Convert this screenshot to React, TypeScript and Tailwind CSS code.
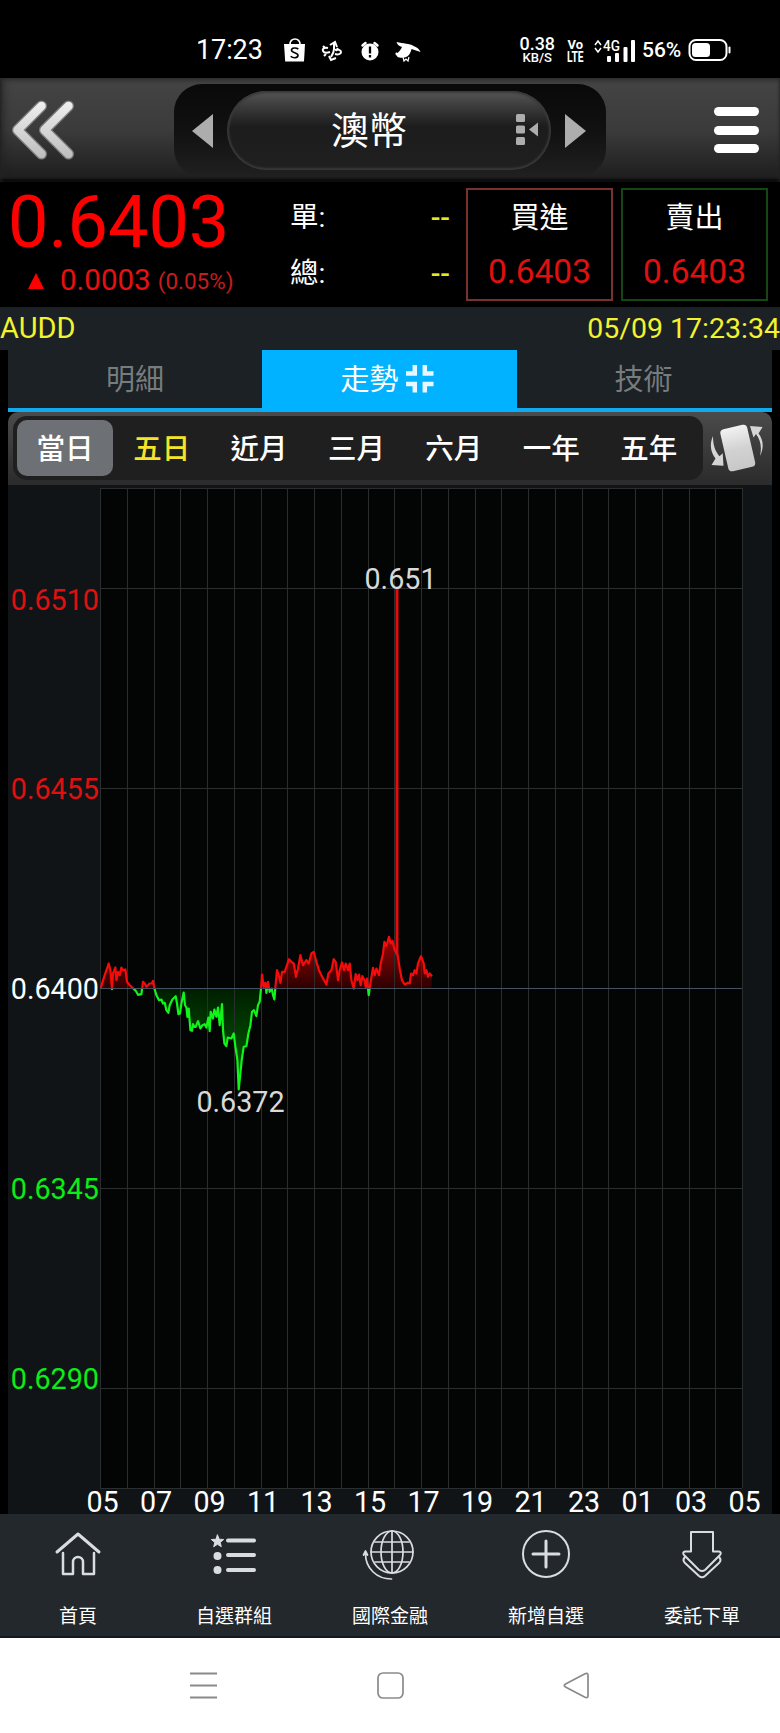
import type { ReactNode } from "react";

const RANGES = ["當日", "五日", "近月", "三月", "六月", "一年", "五年"];
const HOURS = ["05", "07", "09", "11", "13", "15", "17", "19", "21", "23", "01", "03", "05"];

const LEVELS = [
  { label: "0.6510", y: 104, text: 124.5, fill: "#e01010" },
  { label: "0.6455", y: 304, text: 313.5, fill: "#e01010" },
  { label: "0.6400", y: 504, text: 514, fill: "#ffffff" },
  { label: "0.6345", y: 704, text: 714, fill: "#0cec18" },
  { label: "0.6290", y: 904, text: 904, fill: "#0cec18" },
];

// [time, offset from the open], three steps to a pixel
const TICKS = [
  [0, 2], [12, 40], [24, 75], [29, 55], [34, -2], [37, 45], [44, 63], [47, 25], [52, 50], [57, 40],
  [62, 63], [67, 55], [74, 57], [79, 20], [87, 10], [97, 1], [105, -7], [112, -19], [122, -17], [124, -3],
  [127, 20], [132, 15], [137, 5], [147, 15], [154, 15], [157, 23], [161, 0], [167, -20], [175, -35], [182, -33],
  [187, -45], [192, -43], [197, -65], [203, -73], [207, -50], [215, -33], [225, -23], [229, -45], [233, -77], [238, -75],
  [242, -45], [249, -12], [253, -50], [257, -57], [260, -85], [264, -60], [269, -125], [274, -127], [277, -107], [281, -115],
  [285, -115], [292, -98], [299, -120], [305, -110], [312, -107], [317, -117], [323, -87], [327, -128], [330, -70], [337, -90],
  [341, -63], [347, -85], [352, -57], [357, -110], [360, -85], [364, -47], [367, -125], [371, -165], [377, -173], [381, -147],
  [392, -150], [399, -135], [404, -175], [410, -215], [414, -303], [419, -255], [423, -215], [429, -175], [437, -173], [443, -135],
  [449, -110], [454, -70], [460, -65], [467, -83], [472, -50], [477, -40], [481, 0], [484, 42], [489, 5], [494, 17],
  [497, -13], [502, 20], [507, -10], [513, 0], [517, -20], [521, -33], [525, 15], [529, 55], [534, 40], [539, 17],
  [544, 50], [552, 50], [559, 70], [565, 88], [572, 80], [579, 75], [586, 35], [592, 60], [599, 100], [607, 70],
  [617, 85], [624, 75], [632, 105], [639, 110], [647, 80], [655, 55], [662, 40], [669, 27], [677, 12], [683, 45],
  [692, 55], [699, 88], [705, 80], [712, 25], [717, 55], [724, 78], [730, 55], [735, 75], [742, 55], [747, 75],
  [752, 25], [759, 0], [765, 43], [770, 25], [775, 42], [780, 10], [785, 37], [791, 25], [795, 5], [799, 30],
  [804, -20], [809, 15], [817, 62], [822, 40], [827, 60], [835, 40], [840, 75], [847, 105], [851, 140], [857, 127],
  [865, 155], [870, 135], [875, 143], [882, 115], [891, 100], [897, 60], [904, 25], [912, 12], [922, 17], [927, 15],
  [931, 45], [937, 40], [942, 55], [947, 45], [952, 75], [961, 97], [969, 75], [972, 45], [977, 55], [982, 35],
  [987, 45], [994, 37],
];

const PLOT = { left: 92, top: 3, width: 642, height: 1000, base: 503.5 };
const line = TICKS.map(([t, v]) => `${(PLOT.left + 0.7 + t / 3).toFixed(1)},${(PLOT.base - v / 3).toFixed(1)}`).join(" ");
const area = `${PLOT.left},${PLOT.base} ${line} ${PLOT.left + 994 / 3},${PLOT.base}`;

function StatusBar() {
  return (
    <div className="flex h-[78px] items-center bg-black pl-[196px] pr-[49px] pt-[22px] text-white">
      <span className="w-[88px] text-[27px] leading-none tracking-[-0.1px]">17:23</span>
      <svg width="140" height="28" viewBox="0 0 140 28" fill="none">
        <path d="M6 9V8a5 5 0 0 1 10 0v1" stroke="#fff" strokeWidth="1.7" />
        <path d="M0 8h21l-1 17.500H1.200z" fill="#fff" />
        <path d="M14.300 13.200c-2-1.900-6.800-1.700-6.800 1 0 3 6.700 1.900 6.500 5.200-.2 2.900-5.100 3-7.300.8" stroke="#000" strokeWidth="1.600" />
        <g stroke="#fff" strokeWidth="2">
          <path d="M47 21c2-3 3-5 3-8M46 9l5-3 2 5M50 6l0 7" />
          <path d="M44 12c-4-1-6 1-5 3s4 2 7 1M39 10l2 2" />
          <path d="M51 14c3-1 6 0 6 2s-3 3-6 2M54 12l-2 3" />
          <path d="M45 20l2 4 5-2M42 18l-2 2" />
        </g>
        <circle cx="86" cy="16" r="8.500" fill="#fff" />
        <path d="M78.500 9.500l3-2.500M93.500 9.500l-3-2.500" stroke="#fff" strokeWidth="2.500" strokeLinecap="round" />
        <path d="M86 10.500v7M86 19v2.400" stroke="#000" strokeWidth="2.300" />
        <path
          d="M112.500 6c7 2 13 1 17 4 3 1 6 3 7 6l-9-3c-1 5-4 9-8 8.500-4 .5-6 0-7-2-2-1-1-4 1-2.500 2-2 3-3 4.500-6-3-1-4.500-2-5.500-5z"
          fill="#fff"
        />
        <path d="M119 21l1 4 2-2 2 2 1-4" stroke="#fff" strokeWidth="1.200" />
      </svg>
      <svg width="37" height="28" viewBox="0 0 37 28" className="ml-auto" fill="#fff" fontWeight="500">
        <text x="0.500" y="13.500" fontSize="17.500" textLength="35.500" lengthAdjust="spacingAndGlyphs">0.38</text>
        <text x="3.500" y="26" fontSize="13" textLength="29.500" lengthAdjust="spacingAndGlyphs">KB/S</text>
      </svg>
      <svg width="17" height="26" viewBox="0 0 17 26" className="ml-[11px]" fill="#fff" fontWeight="700">
        <text x="0.500" y="12" fontSize="13.500" textLength="15.500" lengthAdjust="spacingAndGlyphs">Vo</text>
        <text x="0" y="24.500" fontSize="14" textLength="16.500" lengthAdjust="spacingAndGlyphs">LTE</text>
      </svg>
      <svg width="42" height="26" viewBox="0 0 42 26" className="ml-[10px]" fill="#fff">
        <path d="M1 8l3-4 3 4M1 11l3 4 3-4" fill="none" stroke="#fff" strokeWidth="1.500" />
        <text x="9" y="14" fontSize="15" fontWeight="500" textLength="17" lengthAdjust="spacingAndGlyphs">4G</text>
        <rect x="13" y="19" width="4" height="6" rx="1" />
        <rect x="21" y="16" width="4" height="9" rx="1" />
        <rect x="29.500" y="10" width="4" height="15" rx="1" />
        <rect x="37" y="3" width="4" height="22" rx="1" />
      </svg>
      <span className="ml-[6px] w-[42px] whitespace-nowrap text-[21px] font-medium leading-none">56%</span>
      <svg width="43" height="24" viewBox="0 0 43 24" className="ml-[4px]">
        <rect x="1.500" y="2" width="37" height="20" rx="6.500" fill="none" stroke="#fff" strokeWidth="2" />
        <rect x="4" y="5" width="18" height="14" rx="3.500" fill="#fff" />
        <rect x="40.500" y="8.500" width="2" height="7" rx="1" fill="#fff" />
      </svg>
    </div>
  );
}

function TitleBar() {
  return (
    <div className="flex h-[104px] items-start bg-linear-to-b from-[#444] via-[#3b3b3b] to-[#1c1c1c] pl-[10px] pr-[21px] pt-[6px] shadow-[inset_0_2px_4px_#2b2b2b,inset_0_-3px_2px_#0a0a0a,inset_8px_0_10px_-6px_#222]">
      <svg width="66" height="66" viewBox="0 0 66 66" className="mt-[13px]">
        <defs>
          <linearGradient id="back" x1="0" y1="0" x2="0" y2="66" gradientUnits="userSpaceOnUse">
            <stop offset="0" stopColor="#f4f4f4" />
            <stop offset="1" stopColor="#b9b9b9" />
          </linearGradient>
        </defs>
        <g fill="none" stroke="#7c7c7c" strokeWidth="11" strokeLinecap="round" strokeLinejoin="round">
          <path d="M31.500 9L7.500 33l24 24M58.500 9L34.500 33l24 24" />
        </g>
        <g fill="none" stroke="url(#back)" strokeWidth="8.500" strokeLinecap="round" strokeLinejoin="round">
          <path d="M31.500 9L7.500 33l24 24M58.500 9L34.500 33l24 24" />
        </g>
      </svg>
      <div className="ml-[98px] flex h-[93px] w-[432px] items-center justify-between rounded-[28px] bg-linear-to-b from-[#090909] via-[#111] to-[#202020] pl-[17px] pr-[19px]">
        <svg width="24" height="36" viewBox="0 0 24 36">
          <path d="M1 18L22 1v34z" fill="#adadad" />
        </svg>
        <div className="relative flex h-[79px] w-[324px] items-center justify-center rounded-full bg-linear-to-b from-[#565656] via-[#1c1c1c] via-45% to-[#202020] pr-[40px] shadow-[inset_0_0_2px_2px_#393939]">
          <span className="text-[38px] leading-none text-white">澳幣</span>
          <svg width="23" height="32" viewBox="0 0 23 32" className="absolute right-[12px] top-[22px]" fill="#adadad">
            <rect x="0" y="1" width="9" height="8" rx="1.500" />
            <rect x="0" y="12.500" width="9" height="8" rx="1.500" />
            <rect x="0" y="24" width="9" height="8" rx="1.500" />
            <path d="M13 16.500l9-7v14z" />
          </svg>
        </div>
        <svg width="24" height="36" viewBox="0 0 24 36">
          <path d="M23 18L2 1v34z" fill="#adadad" />
        </svg>
      </div>
      <div className="ml-auto mt-[23px] flex w-[45px] flex-col gap-[9.500px]">
        <div className="h-[9px] rounded-full bg-white" />
        <div className="h-[9px] rounded-full bg-white" />
        <div className="h-[9px] rounded-full bg-white" />
      </div>
    </div>
  );
}

function PriceBox({ title, border }: { title: string; border: string }) {
  return (
    <div className={`flex h-[113px] w-[147px] flex-col items-center border-2 ${border}`}>
      <span className="mt-[9px] text-[29px] leading-[38px] text-white">{title}</span>
      <span className="mt-[15px] text-[33.500px] leading-[40px] text-[#e01010]">0.6403</span>
    </div>
  );
}

function Quote() {
  return (
    <div className="flex h-[125px] bg-black">
      <div className="w-[290px] whitespace-nowrap pl-[8px] text-[#f00]">
        <div className="mt-[6px] text-[72px] leading-[70px]">0.6403</div>
        <div className="flex items-center pl-[20px]">
          <svg width="16" height="16" viewBox="0 0 16 16">
            <path d="M8 0l8 16H0z" fill="#f00" />
          </svg>
          <span className="ml-[16px] text-[29.500px] leading-[45px] text-[#e81010]">0.0003</span>
          <span className="ml-[7px] text-[22.500px] leading-[40px] text-[#c71c1c]">(0.05%)</span>
        </div>
      </div>
      <div className="flex w-[160px] flex-col pt-[15px] text-[28.500px] leading-[42px] text-white">
        <div className="flex justify-between">
          <span>單:</span>
          <span className="font-medium text-[#e8e81c]">--</span>
        </div>
        <div className="mt-[14px] flex justify-between">
          <span>總:</span>
          <span className="font-medium text-[#e8e81c]">--</span>
        </div>
      </div>
      <div className="ml-[16px] mt-[6px] flex gap-[8px]">
        <PriceBox title="買進" border="border-[#7b3030]" />
        <PriceBox title="賣出" border="border-[#164616]" />
      </div>
    </div>
  );
}

function Tabs() {
  return (
    <div className="flex h-[62px] border-b-4 border-[#12a9ee] bg-[#1b2124] text-[29px] leading-[60px] text-[#777c7e]">
      <div className="w-[254px] text-center">明細</div>
      <div className="flex h-[62px] w-[255px] justify-center bg-[#00b2ff] pr-[5px] text-white">
        走勢
        <svg width="28" height="28" viewBox="0 0 28 28" className="ml-[7px] mt-[15px]" fill="none" stroke="#e8f7ff" strokeWidth="4.500">
          <path d="M0 8.500h8.800V0M27.500 8.500h-8.700V0M0 19h8.800v8.500M27.500 19h-8.700v8.500" />
        </svg>
      </div>
      <div className="w-[253px] text-center">技術</div>
    </div>
  );
}

function RangeBar() {
  return (
    <div className="flex h-[73px] rounded-t-[10px] bg-linear-to-b from-[#4b4b4b] to-[#2b2b2b] pl-[5px] pt-[4px]">
      <div className="flex h-[64px] w-[690px] rounded-[14px] bg-[#1f1f1f] pl-[4px] pt-[4px]">
        {RANGES.map((r, i) => (
          <div
            key={r}
            className={`h-[56px] rounded-[10px] text-center text-[28.500px] font-medium leading-[60px] ${
              i === 0 ? "w-[96px] bg-[#6d7175] text-white" : i === 1 ? "w-[97.400px] text-[#f5e327]" : "w-[97.400px] text-white"
            }`}
          >
            {r}
          </div>
        ))}
      </div>
      <svg width="54" height="54" viewBox="0 0 54 54" className="ml-[7px] mt-[5px]">
        <defs>
          <linearGradient id="phone" x1="0" y1="4" x2="0" y2="52" gradientUnits="userSpaceOnUse">
            <stop offset="0" stopColor="#f4f4f4" />
            <stop offset="0.5" stopColor="#d2d2d2" />
            <stop offset="1" stopColor="#c6c6c6" />
          </linearGradient>
        </defs>
        <g transform="rotate(-13 27.700 27)">
          <rect x="14" y="5.500" width="27.500" height="43" rx="4" fill="url(#phone)" />
        </g>
        <path d="M3 15c-4 9-2 17 2.500 22.500L1.500 44l12 .7-.8-12.500-3.200 3C5 30 3 24 3 15z" fill="#d5d5d5" />
        <path d="M50 35c4.500-9 3-17-1.500-22.500L52.600 6 40 5l3.500 11.500 2.500-3.500c4.500 6 6 13 4 22z" fill="#d5d5d5" />
      </svg>
    </div>
  );
}

function Chart() {
  const { left, top, width, height, base } = PLOT;
  return (
    <svg width="764" height="1029" viewBox="0 0 764 1029" fontSize="28.700" className="block overflow-visible bg-[#101417]">
      <defs>
        <clipPath id="above">
          <rect x="0" y="0" width="764" height={base} />
        </clipPath>
        <clipPath id="below">
          <rect x="0" y={base} width="764" height="300" />
        </clipPath>
        <linearGradient id="up" x1="0" y1="450" x2="0" y2={base} gradientUnits="userSpaceOnUse">
          <stop offset="0" stopColor="#a00404" />
          <stop offset="1" stopColor="#2c0000" />
        </linearGradient>
        <linearGradient id="down" x1="0" y1={base} x2="0" y2="600" gradientUnits="userSpaceOnUse">
          <stop offset="0" stopColor="#001e00" />
          <stop offset="1" stopColor="#006400" />
        </linearGradient>
      </defs>
      <rect x={left} y={top} width={width} height={height} fill="#030504" />
      <polygon points={area} fill="url(#up)" clipPath="url(#above)" />
      <polygon points={area} fill="url(#down)" clipPath="url(#below)" />
      <g stroke="#2b2e2f" strokeWidth="1">
        {Array.from({ length: 25 }, (_, i) => {
          const x = Math.round(left + (i * width) / 24) + 0.5;
          return <line key={i} x1={x} x2={x} y1={top} y2={top + height} />;
        })}
        <line x1={left} x2={left + width} y1={top + 0.5} y2={top + 0.5} />
        <line x1={left} x2={left + width} y1={top + height + 0.5} y2={top + height + 0.5} />
        {LEVELS.map((l) => (
          <line key={l.label} x1={left} x2={left + width} y1={l.y - 0.5} y2={l.y - 0.5} />
        ))}
      </g>
      <g fill="none" strokeWidth="2.200" strokeLinejoin="round">
        <polyline points={line} stroke="#f40c0c" clipPath="url(#above)" />
        <polyline points={line} stroke="#10f41c" clipPath="url(#below)" />
      </g>
      <line x1="389" x2="389" y1="104" y2="470" stroke="#e60c0c" strokeWidth="3" />
      <line x1={left} x2={left + width} y1={base} y2={base} stroke="#46515f" strokeWidth="1" />
      {LEVELS.map((l) => (
        <text key={l.label} x="91" y={l.text} fill={l.fill} textAnchor="end">
          {l.label}
        </text>
      ))}
      <g fill="#d9d9d9" textAnchor="middle">
        <text x="392.500" y="103.500">0.651</text>
        <text x="232.500" y="627">0.6372</text>
      </g>
      <g fill="#fff" textAnchor="middle">
        {HOURS.map((h, i) => (
          <text key={i} x={94.5 + i * 53.5} y="1027">
            {h}
          </text>
        ))}
      </g>
    </svg>
  );
}

function NavItem({ label, children }: { label: string; children: ReactNode }) {
  return (
    <div className="flex flex-1 flex-col items-center pt-[14px]">
      <svg width="56" height="56" viewBox="0 0 56 56" fill="none" stroke="#dadddf" strokeWidth="2" strokeLinecap="round" strokeLinejoin="round">
        {children}
      </svg>
      <span className="mt-[18px] text-[19px] leading-[30px] text-white">{label}</span>
    </div>
  );
}

function BottomNav() {
  return (
    <div className="flex h-[124px] border-b-2 border-[#15191b] bg-[#23282c]">
      <NavItem label="首頁">
        <path d="M7 24L28 6l21 18" strokeWidth="3" />
        <path d="M13 25v21h10V34a5 5 0 0 1 10 0v12h11V25" strokeWidth="2.500" />
      </NavItem>
      <NavItem label="自選群組">
        <path d="M11.500 7l1.700 4.200 4.500.3-3.500 2.900 1.100 4.300-3.800-2.400-3.800 2.400 1.100-4.300-3.500-2.900 4.500-.3z" fill="#dadddf" strokeWidth="1" />
        <circle cx="11.500" cy="28" r="3" fill="#dadddf" />
        <circle cx="11.500" cy="42" r="3" fill="#dadddf" />
        <path d="M22 12.500h26M22 27h26M22 42h26" strokeWidth="4" />
      </NavItem>
      <NavItem label="國際金融">
        <g strokeWidth="1.700">
          <circle cx="30" cy="24" r="21" />
          <ellipse cx="30" cy="24" rx="11" ry="21" />
          <path d="M30 3v42M9 24h42M13 14h34M13 34h34" />
          <path d="M3.500 26c0 14 11 25 26 25M1.500 27l2-4 2 4" />
        </g>
      </NavItem>
      <NavItem label="新增自選">
        <circle cx="28" cy="26" r="23" />
        <path d="M28 13v26M15 26h26" strokeWidth="3" />
      </NavItem>
      <NavItem label="委託下單">
        <path d="M17 4h22v19.500h6q3 1 1 3.500L31 42q-3 2-6 0L10 27q-2-2.500 1-3.500h6z" />
        <path d="M11 29q-3 3 0 6l14 13q3 2.500 6 0l14-13q3-3 0-6" />
      </NavItem>
    </div>
  );
}

function SystemNav() {
  return (
    <div className="flex h-[95px] items-center justify-between bg-white px-[190px]">
      <svg width="27" height="27" viewBox="0 0 27 27" stroke="#8a8a8a" strokeWidth="2">
        <path d="M0 1.500h27M0 13.500h27M0 25.500h27" />
      </svg>
      <svg width="27" height="27" viewBox="0 0 27 27" fill="none" stroke="#8a8a8a" strokeWidth="1.700">
        <rect x="1" y="1" width="25" height="25" rx="5" />
      </svg>
      <svg width="27" height="27" viewBox="0 0 27 27" fill="none" stroke="#8a8a8a" strokeWidth="1.700">
        <path d="M2.500 12L22 1.800q3-1.300 3 1.700v20q0 3-3 1.700L2.500 15q-2.500-1.500 0-3z" />
      </svg>
    </div>
  );
}

export default function App() {
  return (
    <div className="w-[780px] overflow-hidden bg-black font-['Roboto','Noto_Sans_CJK_TC',sans-serif]">
      <StatusBar />
      <TitleBar />
      <Quote />
      <div className="flex h-[43px] justify-between bg-[#1b2124] text-[28.500px] leading-[43px] text-[#f2f230]">
        <span className="text-[29px]">AUDD</span>
        <span>05/09 17:23:34</span>
      </div>
      <div className="px-[8px]">
        <Tabs />
        <RangeBar />
        <Chart />
      </div>
      <BottomNav />
      <SystemNav />
    </div>
  );
}
